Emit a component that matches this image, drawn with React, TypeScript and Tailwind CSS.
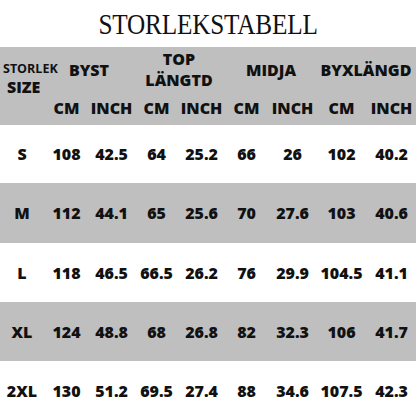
import React from "react";

const cols = "grid grid-cols-[44px_45px_45px_45px_45px_45px_47px_51px_49px]";

const rows: { size: string; vals: string[]; gray: boolean; h: string }[] = [
  { size: "S", vals: ["108", "42.5", "64", "25.2", "66", "26", "102", "40.2"], gray: false, h: "h-[58px]" },
  { size: "M", vals: ["112", "44.1", "65", "25.6", "70", "27.6", "103", "40.6"], gray: true, h: "h-[60px]" },
  { size: "L", vals: ["118", "46.5", "66.5", "26.2", "76", "29.9", "104.5", "41.1"], gray: false, h: "h-[59px]" },
  { size: "XL", vals: ["124", "48.8", "68", "26.8", "82", "32.3", "106", "41.7"], gray: true, h: "h-[59px]" },
  { size: "2XL", vals: ["130", "51.2", "69.5", "27.4", "88", "34.6", "107.5", "42.3"], gray: false, h: "h-[59px]" },
];

export default function App() {
  return (
    <div className="w-[416px] h-[416px] overflow-hidden bg-white text-[#111]" style={{ fontFamily: '"Open Sans", sans-serif' }}>
      <div className="h-[47px] flex items-center justify-center pt-[1px]">
        <div
          className="text-[29px] leading-none scale-x-[0.87] tracking-[-0.2px] text-[#111]"
          style={{ fontFamily: '"Liberation Serif", "Times New Roman", serif' }}
        >
          STORLEKSTABELL
        </div>
      </div>
      <div className={`${cols} grid-rows-[45px_33px] bg-[#bfbfbf] font-extrabold`}>
        <div className="row-span-2 pt-[13px] whitespace-nowrap">
          <div className="text-[12.5px] leading-[18px] pl-[3px] font-bold">STORLEK</div>
          <div className="text-[16px] leading-[19px] pl-[7px]">SIZE</div>
        </div>
        <div className="col-span-2 flex items-center justify-center text-[16px]">BYST</div>
        <div className="col-span-2 flex flex-col items-center justify-center text-[16px] leading-[21px] pt-[1px]">
          <div>TOP</div>
          <div>LÄNGTD</div>
        </div>
        <div className="col-span-2 flex items-center justify-center text-[16px] pl-[2px]">MIDJA</div>
        <div className="col-span-2 flex items-center justify-center text-[16px]">BYXLÄNGD</div>
        {["CM", "INCH", "CM", "INCH", "CM", "INCH", "CM", "INCH"].map((t, i) => (
          <div key={i} className="flex items-center justify-center text-[16px] pb-[1px]">
            {t}
          </div>
        ))}
      </div>
      {rows.map((r) => (
        <div key={r.size} className={`${cols} ${r.h} ${r.gray ? "bg-[#bfbfbf]" : "bg-white"} font-extrabold text-[16px]`}>
          <div className="flex items-center justify-center">{r.size}</div>
          {r.vals.map((v, i) => (
            <div key={i} className="flex items-center justify-center">
              {v}
            </div>
          ))}
        </div>
      ))}
    </div>
  );
}
